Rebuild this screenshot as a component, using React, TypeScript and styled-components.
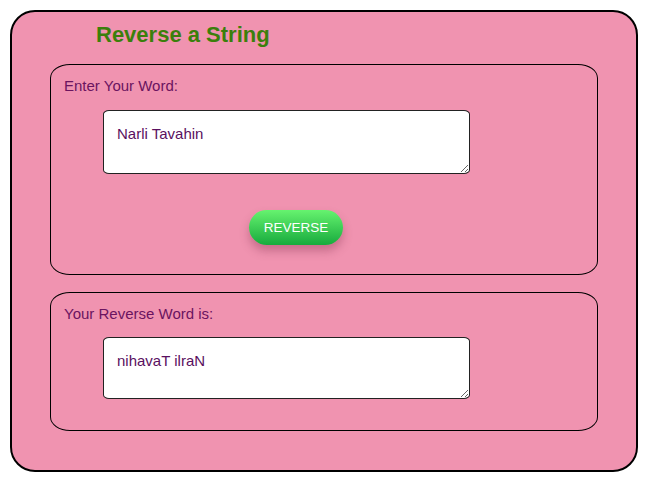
import React, { useState } from "react";
import styled, { createGlobalStyle } from "styled-components";

const Global = createGlobalStyle`
  html, body { margin: 0; padding: 0; background: #ffffff; }
  body { font-family: "Liberation Sans", Arial, sans-serif; }
`;

const Card = styled.div`
  box-sizing: border-box;
  margin: 10px 0 0 10px;
  width: 628px;
  height: 462px;
  background: #f093b0;
  border: 2px solid #000;
  border-radius: 25px;
  padding: 10px 36px 0 38px;
  display: flex;
  flex-direction: column;
`;

const Title = styled.h1`
  margin: 0 0 0 46px;
  font-size: 22px;
  line-height: 26px;
  font-weight: bold;
  color: #3b7f0b;
`;

const Section = styled.fieldset<{ $h: number; $mt: number }>`
  box-sizing: border-box;
  margin: ${(p) => p.$mt}px 0 0 0;
  padding: 12px 13px 0 13px;
  width: 548px;
  height: ${(p) => p.$h}px;
  border: 1px solid #000;
  border-radius: 20px / 14px;
  display: flex;
  flex-direction: column;
  min-width: 0;
`;

const Label = styled.label`
  font-size: 15px;
  line-height: 18px;
  color: #6b1460;
`;

const Area = styled.textarea<{ $mt: number; $h: number }>`
  box-sizing: border-box;
  margin: ${(p) => p.$mt}px 0 0 39px;
  width: 367px;
  height: ${(p) => p.$h}px;
  padding: 14px 13px 10px;
  border: 1.5px solid #222;
  border-radius: 6px / 4px;
  background: #fff;
  font-family: "Liberation Sans", Arial, sans-serif;
  font-size: 15px;
  line-height: 18px;
  color: #5a1060;
  resize: both;
  outline: none;
`;

const Button = styled.button`
  align-self: flex-start;
  margin: 36px 0 0 185px;
  width: 94px;
  height: 35px;
  border: none;
  border-radius: 18px;
  background: linear-gradient(to bottom, #66f36f, #17aa3d);
  color: #fff;
  font-family: "Liberation Sans", Arial, sans-serif;
  font-size: 13.5px;
  box-shadow: 0 6px 10px rgba(120, 40, 70, 0.35);
  cursor: pointer;
`;

export default function App() {
  const [word, setWord] = useState("Narli Tavahin");
  const [rev, setRev] = useState("nihavaT ilraN");
  return (
    <>
      <Global />
      <Card>
        <Title>Reverse a String</Title>
        <Section $h={211} $mt={16}>
          <Label>Enter Your Word:</Label>
          <Area $mt={15} $h={64} value={word} onChange={(e) => setWord(e.target.value)} />
          <Button onClick={() => setRev(word.split("").reverse().join(""))}>REVERSE</Button>
        </Section>
        <Section $h={139} $mt={17}>
          <Label>Your Reverse Word is:</Label>
          <Area $mt={14} $h={62} value={rev} readOnly />
        </Section>
      </Card>
    </>
  );
}
